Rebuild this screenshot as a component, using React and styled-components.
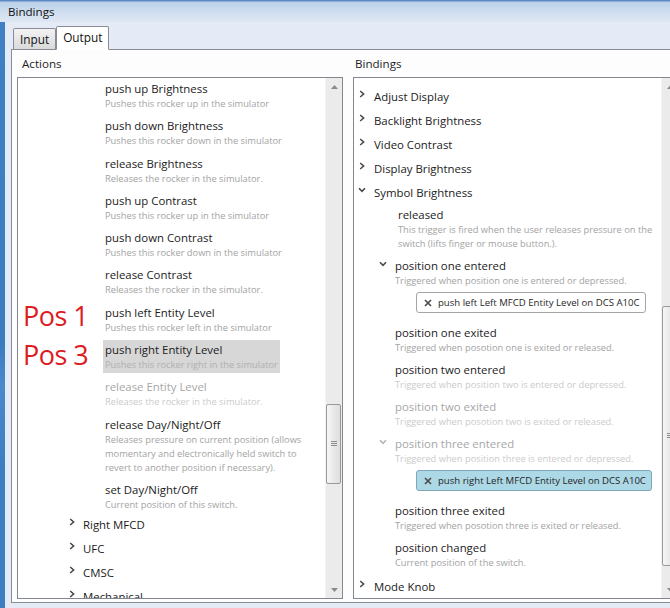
import React from "react";
import styled, { createGlobalStyle } from "styled-components";

const GlobalStyle = createGlobalStyle`
  html, body {
    margin: 0;
    padding: 0;
    background: #e3eaf5;
  }
  * {
    box-sizing: border-box;
  }
`;

const Window = styled.div`
  width: 670px;
  height: 608px;
  overflow: hidden;
  display: flex;
  flex-direction: column;
  font-family: "Open Sans", "Noto Sans", sans-serif;
  color: #1b1b1b;
`;

const TitleBar = styled.div`
  height: 22px;
  flex: none;
  padding-left: 8px;
  font-size: 11.6px;
  line-height: 24px;
  color: #111;
  background: linear-gradient(
    #5d8ac0 0,
    #5d8ac0 1px,
    #b9cfe9 2px,
    #cddcef 11px,
    #dfe8f4 22px
  );
`;

const Body = styled.div`
  flex: 1;
  display: flex;
  min-height: 0;
`;

const FrameEdge = styled.div`
  width: 5px;
  flex: none;
  background: linear-gradient(#3f7fc4, #3b7bc0 55%, #4a8acb 62%, #3d7ec2 75%);
`;

const Client = styled.div`
  flex: 1;
  display: flex;
  flex-direction: column;
  background: #e4ebf6;
  min-width: 0;
`;

const TabStrip = styled.div`
  height: 28px;
  flex: none;
  display: flex;
  align-items: flex-end;
  padding-left: 8px;
  margin-bottom: -1px;
  position: relative;
  z-index: 1;
`;

const Tab = styled.div`
  height: ${(p) => (p.$active ? "24px" : "21px")};
  padding: 0 6px;
  margin-bottom: ${(p) => (p.$active ? "0" : "1px")};
  border: 1px solid #898c95;
  border-bottom: ${(p) => (p.$active ? "1px solid #fff" : "none")};
  border-radius: 2px 2px 0 0;
  background: ${(p) =>
    p.$active ? "#fff" : "linear-gradient(#f3f3f3, #e6e6e6 50%, #d9d9d9)"};
  font-size: 11.8px;
  line-height: 20px;
  color: #111;
`;

const TabPanel = styled.div`
  height: 554px;
  flex: none;
  margin-left: 6px;
  border: 1px solid #898c95;
  border-right: none;
  background: #fdfdfd;
  padding-left: 5px;
  display: grid;
  grid-template-columns: 326px 326px;
  column-gap: 10px;
`;

const Column = styled.div`
  display: flex;
  flex-direction: column;
  min-width: 0;
`;

const SectionLabel = styled.div`
  height: 27px;
  padding: 6px 0 0 ${(p) => p.$indent}px;
  font-size: 11.6px;
  line-height: 16px;
  color: #1e1e1e;
`;

const ListBox = styled.div`
  height: 522px;
  border: 1px solid #828790;
  background: #fff;
  display: flex;
  position: relative;
`;

const ListContent = styled.div`
  flex: 1;
  min-width: 0;
  overflow: hidden;
  display: flex;
  flex-direction: column;
  padding-top: ${(p) => p.$top}px;
`;

const ScrollTrack = styled.div`
  width: 17px;
  flex: none;
  display: flex;
  flex-direction: column;
  background: #ebebeb;
  border-left: 1px solid #f4f4f4;
`;

const ScrollButton = styled.div`
  height: 17px;
  flex: none;
  display: flex;
  align-items: center;
  justify-content: center;
`;

const ScrollGap = styled.div`
  flex: ${(p) => (p.$fill ? 1 : "none")};
`;

const Thumb = styled.div`
  flex: none;
  margin: 0 1px 0 0;
  border: 1px solid #999;
  border-radius: 2px;
  background: linear-gradient(90deg, #f6f6f6, #e9e9e9 50%, #dedede);
  display: flex;
  align-items: center;
  justify-content: center;
`;

const ActionGroup = styled.div`
  display: flex;
  flex-direction: column;
  align-items: flex-start;
  gap: 4.3px;
  padding: 1px 0 0 85px;
`;

const ActionItem = styled.div`
  padding: 2px 2px 1px;
  background: ${(p) => (p.$selected ? "#d7d7d7" : "transparent")};
  display: flex;
  flex-direction: column;
`;

const Title = styled.div`
  font-size: 11.4px;
  line-height: 16px;
  white-space: nowrap;
  color: ${(p) => (p.$faded ? "#a7a7a7" : "#1b1b1b")};
`;

const Desc = styled.div`
  font-size: 9.3px;
  line-height: 14px;
  white-space: nowrap;
  color: ${(p) => (p.$faded ? "#cbcbcb" : p.$onSelected ? "#b0b0b0" : "#a3a3a3")};
`;

const TreeHeader = styled.div`
  height: 24px;
  flex: none;
  display: flex;
  align-items: center;
  padding-left: ${(p) => p.$indent}px;
  font-size: 11.4px;
  white-space: nowrap;
  color: #1b1b1b;
`;

const Chevron = styled.span`
  width: ${(p) => p.$slot}px;
  flex: none;
  display: flex;
  align-items: center;
  margin-top: -5px;
`;

const ChildList = styled.div`
  display: flex;
  flex-direction: column;
  gap: 7.3px;
  margin-top: 3px;
  margin-bottom: 4px;
`;

const ChildItem = styled.div`
  display: flex;
  flex-direction: column;
  align-items: flex-start;
`;

const ChildRow = styled.div`
  display: flex;
  padding-left: 23px;
`;

const ChildText = styled.div`
  display: flex;
  flex-direction: column;
  padding-left: ${(p) => p.$shift}px;
`;

const ChevronSlot = styled.span`
  width: 18px;
  height: 16px;
  flex: none;
  display: flex;
  align-items: flex-start;
  padding: 3px 0 0 2px;
`;

const Chip = styled.div`
  margin: 4px 0 4px 62px;
  height: 21px;
  display: flex;
  align-items: center;
  gap: 6px;
  padding: 0 5px 0 7px;
  border: 1px solid ${(p) => (p.$selected ? "#7fa7ba" : "#a5a5a5")};
  border-radius: 3px;
  background: ${(p) => (p.$selected ? "#add8e6" : "#fff")};
  font-size: 9.6px;
  white-space: nowrap;
  color: #1f1f1f;
`;

const Annotation = styled.div`
  position: absolute;
  left: 5px;
  top: ${(p) => p.$top}px;
  font-size: 27px;
  line-height: 30px;
  letter-spacing: -0.5px;
  color: #dc1c1f;
  pointer-events: none;
`;

const RightArrow = ({ color = "#4a4a4a" }) => (
  <svg width="6" height="8" viewBox="0 0 6 8">
    <polyline points="1.2,1 4.6,4 1.2,7" fill="none" stroke={color} strokeWidth="1.6" />
  </svg>
);

const DownArrow = ({ color = "#4a4a4a" }) => (
  <svg width="8" height="6" viewBox="0 0 8 6">
    <polyline points="1,1.2 4,4.4 7,1.2" fill="none" stroke={color} strokeWidth="1.6" />
  </svg>
);

const CloseIcon = () => (
  <svg width="8" height="8" viewBox="0 0 8 8">
    <path d="M1 1 L7 7 M7 1 L1 7" stroke="#4d4d4d" strokeWidth="1.7" />
  </svg>
);

const Triangle = ({ up }) => (
  <svg width="7" height="4" viewBox="0 0 7 4">
    <polygon points={up ? "0,4 3.5,0 7,4" : "0,0 3.5,4 7,0"} fill="#8a8a8a" />
  </svg>
);

const Grip = () => (
  <svg width="6" height="6" viewBox="0 0 6 6">
    <path d="M0 0.5 H6 M0 2.5 H6 M0 4.5 H6" stroke="#8d8d8d" strokeWidth="1" />
  </svg>
);

const ScrollBar = ({ before, size }) => (
  <ScrollTrack>
    <ScrollButton>
      <Triangle up />
    </ScrollButton>
    <ScrollGap style={{ height: before }} />
    <Thumb style={{ height: size }}>
      <Grip />
    </Thumb>
    <ScrollGap $fill />
    <ScrollButton>
      <Triangle />
    </ScrollButton>
  </ScrollTrack>
);

const actions = [
  { title: "push up Brightness", desc: ["Pushes this rocker up in the simulator"] },
  { title: "push down Brightness", desc: ["Pushes this rocker down in the simulator"] },
  { title: "release Brightness", desc: ["Releases the rocker in the simulator."] },
  { title: "push up Contrast", desc: ["Pushes this rocker up in the simulator"] },
  { title: "push down Contrast", desc: ["Pushes this rocker down in the simulator"] },
  { title: "release Contrast", desc: ["Releases the rocker in the simulator."] },
  { title: "push left Entity Level", desc: ["Pushes this rocker left in the simulator"] },
  {
    title: "push right Entity Level",
    desc: ["Pushes this rocker right in the simulator"],
    selected: true,
  },
  { title: "release Entity Level", desc: ["Releases the rocker in the simulator."], faded: true },
  {
    title: "release Day/Night/Off",
    desc: [
      "Releases pressure on current position (allows",
      "momentary and electronically held switch to",
      "revert to another position if necessary).",
    ],
  },
  { title: "set Day/Night/Off", desc: ["Current position of this switch."] },
];

const devices = ["Right MFCD", "UFC", "CMSC", "Mechanical"];

const bindingGroups = [
  "Adjust Display",
  "Backlight Brightness",
  "Video Contrast",
  "Display Brightness",
];

const triggers = [
  {
    title: "released",
    shift: 3,
    desc: [
      "This trigger is fired when the user releases pressure on the",
      "switch (lifts finger or mouse button.).",
    ],
  },
  {
    title: "position one entered",
    desc: ["Triggered when position one is entered or depressed."],
    expanded: true,
    chip: { text: "push left Left MFCD Entity Level on DCS A10C" },
  },
  { title: "position one exited", desc: ["Triggered when posotion one is exited or released."] },
  {
    title: "position two entered",
    desc: ["Triggered when position two is entered or depressed."],
    descFaded: true,
  },
  {
    title: "position two exited",
    desc: ["Triggered when posotion two is exited or released."],
    faded: true,
  },
  {
    title: "position three entered",
    desc: ["Triggered when position three is entered or depressed."],
    faded: true,
    expanded: true,
    chip: { text: "push right Left MFCD Entity Level on DCS A10C", selected: true },
  },
  {
    title: "position three exited",
    desc: ["Triggered when posotion three is exited or released."],
  },
  { title: "position changed", desc: ["Current position of the switch."] },
];

const ActionsPanel = () => (
  <Column>
    <SectionLabel $indent={5}>Actions</SectionLabel>
    <ListBox>
      <ListContent $top={0}>
        <ActionGroup>
          {actions.map((a) => (
            <ActionItem key={a.title} $selected={a.selected}>
              <Title $faded={a.faded}>{a.title}</Title>
              {a.desc.map((line) => (
                <Desc key={line} $faded={a.faded} $onSelected={a.selected}>
                  {line}
                </Desc>
              ))}
            </ActionItem>
          ))}
        </ActionGroup>
        {devices.map((name) => (
          <TreeHeader key={name} $indent={51}>
            <Chevron $slot={14}>
              <RightArrow />
            </Chevron>
            {name}
          </TreeHeader>
        ))}
      </ListContent>
      <ScrollBar before={309} size={80} />
      <Annotation $top={223}>Pos 1</Annotation>
      <Annotation $top={262}>Pos 3</Annotation>
    </ListBox>
  </Column>
);

const BindingsPanel = () => (
  <Column>
    <SectionLabel $indent={2}>Bindings</SectionLabel>
    <ListBox>
      <ListContent $top={6}>
        {bindingGroups.map((name) => (
          <TreeHeader key={name} $indent={5}>
            <Chevron $slot={15}>
              <RightArrow />
            </Chevron>
            {name}
          </TreeHeader>
        ))}
        <TreeHeader $indent={4}>
          <Chevron $slot={16}>
            <DownArrow />
          </Chevron>
          Symbol Brightness
        </TreeHeader>
        <ChildList>
          {triggers.map((t) => (
            <ChildItem key={t.title}>
              <ChildRow>
                <ChevronSlot>
                  {t.expanded && <DownArrow color={t.faded ? "#b5b5b5" : "#4a4a4a"} />}
                </ChevronSlot>
                <ChildText $shift={t.shift || 0}>
                  <Title $faded={t.faded}>{t.title}</Title>
                  {t.desc.map((line) => (
                    <Desc key={line} $faded={t.faded || t.descFaded}>
                      {line}
                    </Desc>
                  ))}
                </ChildText>
              </ChildRow>
              {t.chip && (
                <Chip $selected={t.chip.selected}>
                  <CloseIcon />
                  {t.chip.text}
                </Chip>
              )}
            </ChildItem>
          ))}
        </ChildList>
        <TreeHeader $indent={5}>
          <Chevron $slot={15}>
            <RightArrow />
          </Chevron>
          Mode Knob
        </TreeHeader>
      </ListContent>
      <ScrollBar before={211} size={260} />
    </ListBox>
  </Column>
);

const App = () => (
  <>
    <GlobalStyle />
    <Window>
      <TitleBar>Bindings</TitleBar>
      <Body>
        <FrameEdge />
        <Client>
          <TabStrip>
            <Tab>Input</Tab>
            <Tab $active>Output</Tab>
          </TabStrip>
          <TabPanel>
            <ActionsPanel />
            <BindingsPanel />
          </TabPanel>
        </Client>
      </Body>
    </Window>
  </>
);

export default App;
